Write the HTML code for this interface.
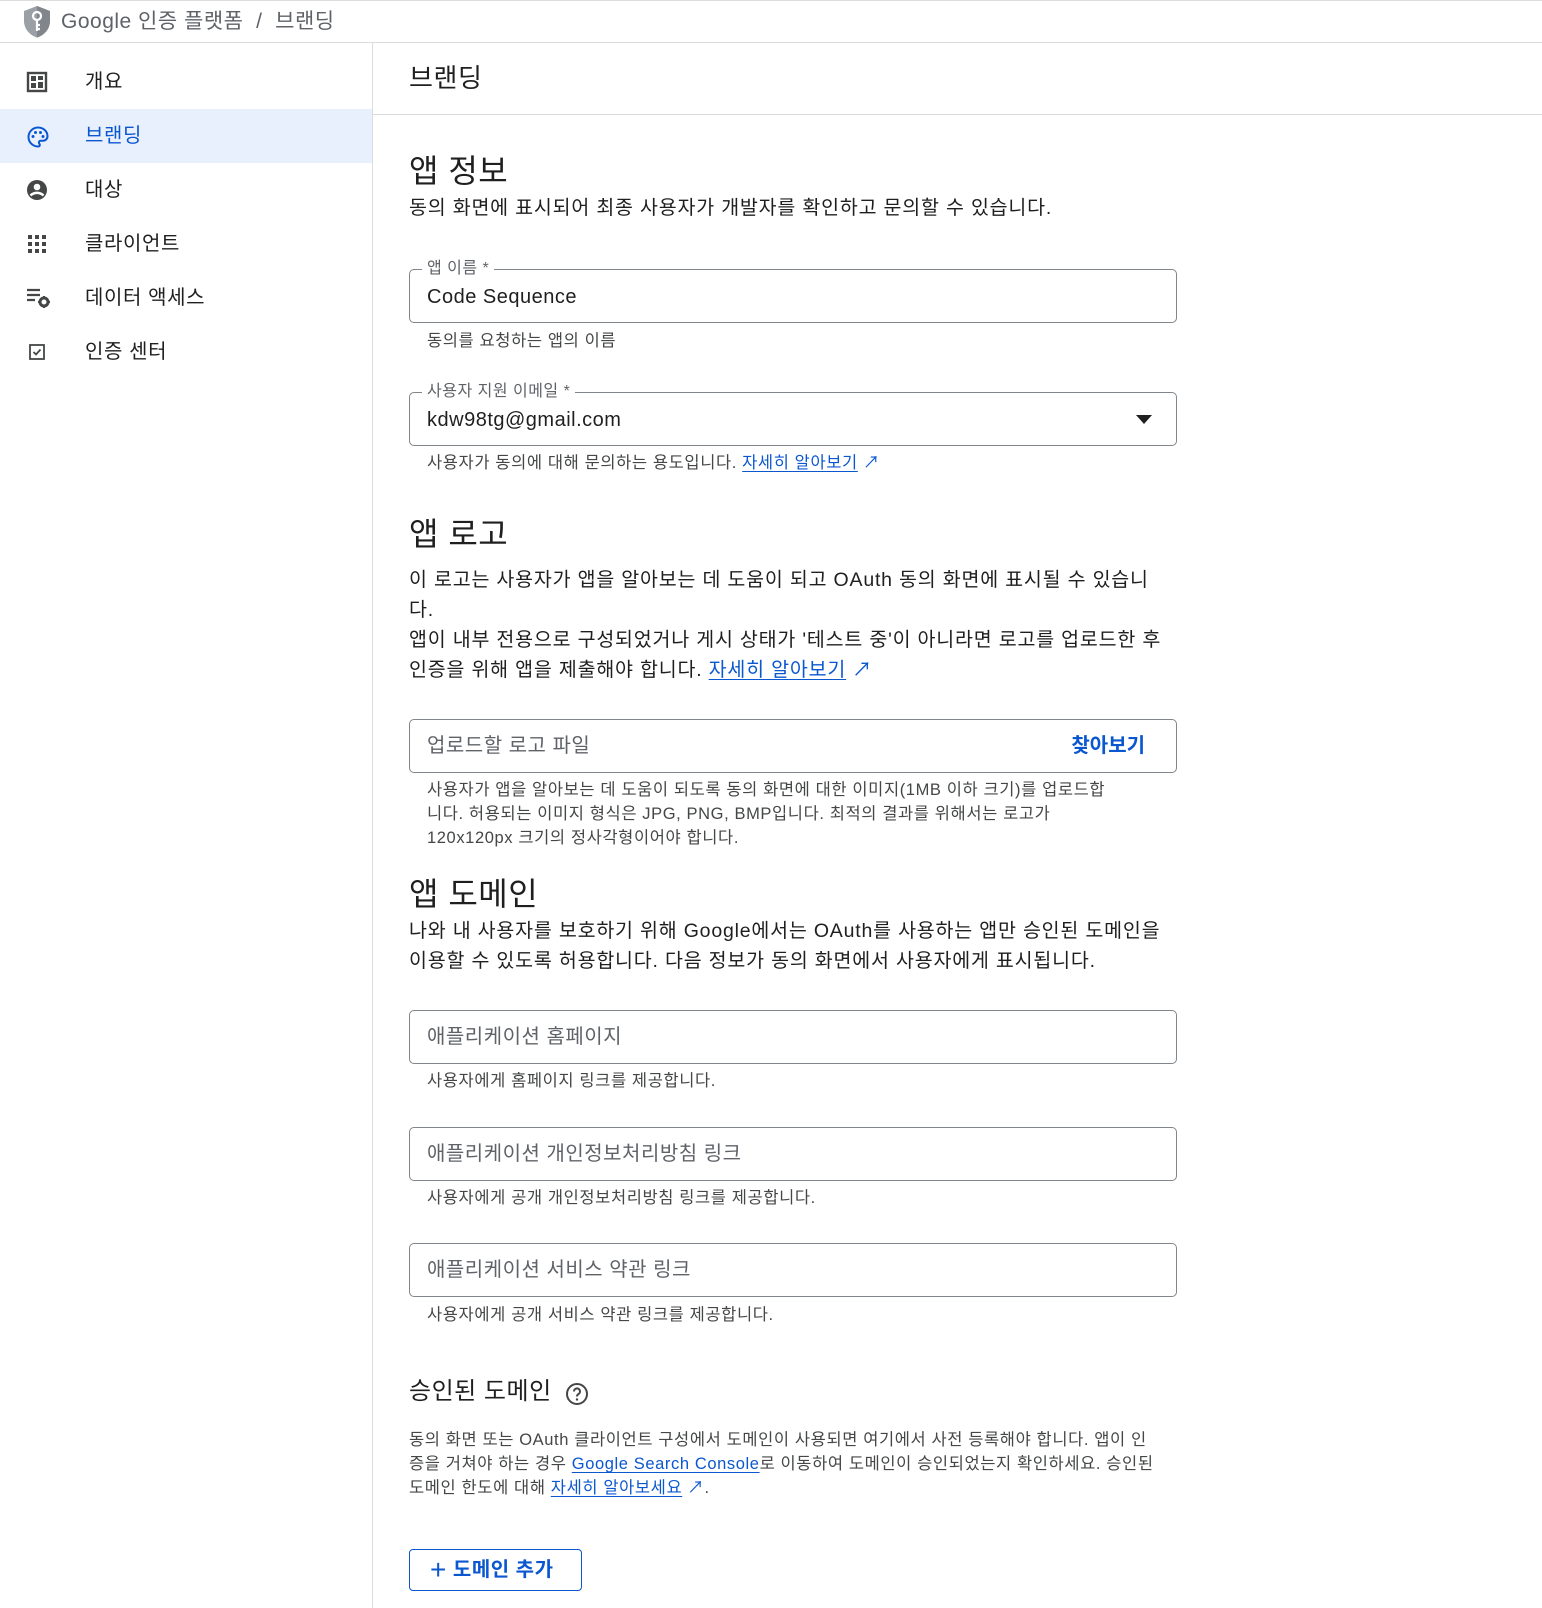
<!DOCTYPE html>
<html><head><meta charset="utf-8"><style>
*{margin:0;padding:0;box-sizing:border-box}
body{width:1542px;height:1608px;background:#fff;font-family:"Liberation Sans","Noto Sans CJK KR",sans-serif;color:#1f1f1f;position:relative;overflow:hidden}
.a{position:absolute;white-space:nowrap}
.top{position:absolute;left:0;top:0;width:1542px;height:43px;border-top:1px solid #ddd;border-bottom:1px solid #dadce0}
.side{position:absolute;left:0;top:43px;width:373px;height:1565px;border-right:1px solid #dadce0}
.item{position:absolute;left:0;width:372px;height:54px;font-size:20px;line-height:54px;letter-spacing:0.6px}
.item .t{position:absolute;left:85px}
.item svg{position:absolute;left:26px;top:16px}
.sel{background:#e8f0fe;color:#0b57d0}
.h1{font-size:32px;line-height:40px;letter-spacing:0.5px}
.p{font-size:19.5px;line-height:30px;color:#1f1f1f;letter-spacing:0.8px}
.help{font-size:16.5px;line-height:24px;color:#444746;letter-spacing:0.6px}
.field{position:absolute;left:409px;width:768px;height:54px;border:1px solid #80868b;border-radius:5px}
.field .v{position:absolute;left:17px;top:14px;font-size:20px;line-height:24px;letter-spacing:0.5px}
.ph{color:#5f6368}
.lbl{position:absolute;left:12px;top:-11px;background:#fff;padding:0 5px;font-size:16px;line-height:20px;color:#5f6368;letter-spacing:0.5px}
a{color:#0b57d0;text-decoration:underline;text-underline-offset:3px}
</style></head><body>
<div class="top">
<svg class="a" style="left:22px;top:4px" width="30" height="34" viewBox="0 0 30 34"><path d="M15 1L2 6v10c0 8 6 14.5 13 16.5 7-2 13-8.5 13-16.5V6z" fill="#9aa0a6"/><path d="M15 1v31.5c7-2 13-8.5 13-16.5V6z" fill="#80868b"/><circle cx="15" cy="11" r="4" fill="none" stroke="#fff" stroke-width="2.2"/><path d="M15 15v11M15 20h3M15 24h3" stroke="#fff" stroke-width="2.2"/></svg>
<div class="a" style="left:61px;top:7px;font-size:21px;line-height:28px;color:#5f6368;letter-spacing:0.5px">Google 인증 플랫폼 &nbsp;/ &nbsp;브랜딩</div>
</div>
<div class="side">
<div class="item" style="top:12px"><svg width="22" height="22" viewBox="0 0 22 22"><rect x="2" y="2" width="18" height="18" fill="none" stroke="#444746" stroke-width="2.4"/><rect x="5" y="5" width="5" height="5" fill="#444746"/><rect x="5" y="12" width="5" height="5" fill="#444746"/><rect x="12" y="5" width="5" height="4" fill="#444746"/><rect x="12" y="11" width="5" height="6" fill="#444746"/></svg><span class="t">개요</span></div>
<div class="item sel" style="top:66px"><svg width="24" height="24" viewBox="0 0 24 24"><path d="M12 2.5a9.5 9.5 0 0 0 0 19c1.3 0 1.8-.8 1.8-1.6 0-1-.9-1.4-.9-2.4 0-1 .8-1.7 1.8-1.7h2.2c2.6 0 4.6-2 4.6-4.6C21.5 6.3 17.3 2.5 12 2.5z" fill="none" stroke="#0b57d0" stroke-width="2"/><circle cx="7" cy="11.5" r="1.5" fill="#0b57d0"/><circle cx="9.5" cy="7.5" r="1.5" fill="#0b57d0"/><circle cx="14.5" cy="7.5" r="1.5" fill="#0b57d0"/><circle cx="17" cy="11.5" r="1.5" fill="#0b57d0"/></svg><span class="t">브랜딩</span></div>
<div class="item" style="top:120px"><svg width="22" height="22" viewBox="0 0 22 22"><circle cx="11" cy="11" r="10" fill="#444746"/><circle cx="11" cy="8" r="3.3" fill="#fff"/><path d="M4.5 16.5c3.5-3.5 9.5-3.5 13 0" stroke="#fff" stroke-width="2.4" fill="none"/></svg><span class="t">대상</span></div>
<div class="item" style="top:174px"><svg width="22" height="22" viewBox="0 0 22 22" fill="#444746"><rect x="2" y="2" width="4" height="4"/><rect x="9" y="2" width="4" height="4"/><rect x="16" y="2" width="4" height="4"/><rect x="2" y="9" width="4" height="4"/><rect x="9" y="9" width="4" height="4"/><rect x="16" y="9" width="4" height="4"/><rect x="2" y="16" width="4" height="4"/><rect x="9" y="16" width="4" height="4"/><rect x="16" y="16" width="4" height="4"/></svg><span class="t">클라이언트</span></div>
<div class="item" style="top:228px"><svg width="26" height="22" viewBox="0 0 26 22"><path d="M1 3h13M1 8h13M1 13h8" stroke="#444746" stroke-width="2.2"/><circle cx="18" cy="15" r="4" fill="none" stroke="#444746" stroke-width="3"/><path d="M18 9v2M18 19v2M12 15h2M22 15h2" stroke="#444746" stroke-width="2"/></svg><span class="t">데이터 액세스</span></div>
<div class="item" style="top:282px"><svg width="22" height="22" viewBox="0 0 22 22"><rect x="4" y="4" width="14" height="14" fill="none" stroke="#444746" stroke-width="1.8"/><path d="M7.5 11l2.5 2.5 4.5-5" stroke="#444746" stroke-width="1.8" fill="none"/></svg><span class="t">인증 센터</span></div>
</div>
<div class="a" style="left:409px;top:61px;font-size:26px;line-height:34px;letter-spacing:0.6px">브랜딩</div>
<div class="a" style="left:373px;top:114px;width:1169px;height:1px;background:#dadce0"></div>

<div class="a h1" style="left:409px;top:151px">앱 정보</div>
<div class="a p" style="left:409px;top:193px">동의 화면에 표시되어 최종 사용자가 개발자를 확인하고 문의할 수 있습니다.</div>
<div class="field" style="top:269px"><span class="lbl">앱 이름 *</span><span class="v a" style="top:15px">Code Sequence</span></div>
<div class="a help" style="left:427px;top:329px">동의를 요청하는 앱의 이름</div>
<div class="field" style="top:392px"><span class="lbl">사용자 지원 이메일 *</span><span class="v a" style="top:15px">kdw98tg@gmail.com</span><svg class="a" style="right:24px;top:22px" width="16" height="9"><path d="M0 0h16L8 9z" fill="#1f1f1f"/></svg></div>
<div class="a help" style="left:427px;top:451px">사용자가 동의에 대해 문의하는 용도입니다. <a href="#">자세히 알아보기</a> <span style="color:#0b57d0">↗</span></div>

<div class="a h1" style="left:409px;top:514px">앱 로고</div>
<div class="a p" style="left:409px;top:565px;white-space:normal;width:760px;word-break:break-all">이 로고는 사용자가 앱을 알아보는 데 도움이 되고 OAuth 동의 화면에 표시될 수 있습니다.<br>앱이 내부 전용으로 구성되었거나 게시 상태가 '테스트 중'이 아니라면 로고를 업로드한 후 인증을 위해 앱을 제출해야 합니다. <a href="#">자세히 알아보기</a> <span style="color:#0b57d0">↗</span></div>
<div class="field" style="top:719px"><span class="v a ph">업로드할 로고 파일</span><span class="a" style="right:31px;top:13px;font-size:20px;line-height:26px;color:#0b57d0;font-weight:bold">찾아보기</span></div>
<div class="a help" style="left:427px;top:778px;white-space:normal;width:688px">사용자가 앱을 알아보는 데 도움이 되도록 동의 화면에 대한 이미지(1MB 이하 크기)를 업로드합니다. 허용되는 이미지 형식은 JPG, PNG, BMP입니다. 최적의 결과를 위해서는 로고가 120x120px 크기의 정사각형이어야 합니다.</div>

<div class="a h1" style="left:409px;top:874px">앱 도메인</div>
<div class="a p" style="left:409px;top:916px;white-space:normal;width:760px">나와 내 사용자를 보호하기 위해 Google에서는 OAuth를 사용하는 앱만 승인된 도메인을 이용할 수 있도록 허용합니다. 다음 정보가 동의 화면에서 사용자에게 표시됩니다.</div>
<div class="field" style="top:1010px"><span class="v a ph">애플리케이션 홈페이지</span></div>
<div class="a help" style="left:427px;top:1069px">사용자에게 홈페이지 링크를 제공합니다.</div>
<div class="field" style="top:1127px"><span class="v a ph">애플리케이션 개인정보처리방침 링크</span></div>
<div class="a help" style="left:427px;top:1186px">사용자에게 공개 개인정보처리방침 링크를 제공합니다.</div>
<div class="field" style="top:1243px"><span class="v a ph">애플리케이션 서비스 약관 링크</span></div>
<div class="a help" style="left:427px;top:1303px">사용자에게 공개 서비스 약관 링크를 제공합니다.</div>

<div class="a" style="left:409px;top:1377px;font-size:24px;line-height:30px;letter-spacing:0.5px">승인된 도메인</div>
<svg class="a" style="left:565px;top:1382px" width="24" height="24" viewBox="0 0 24 24"><circle cx="12" cy="12" r="10" fill="none" stroke="#444746" stroke-width="2"/><path d="M9 9.5a3 3 0 1 1 4.5 2.5c-1 .6-1.5 1.2-1.5 2.5" fill="none" stroke="#444746" stroke-width="2"/><circle cx="12" cy="17.5" r="1.2" fill="#444746"/></svg>
<div class="a help" style="left:409px;top:1428px;white-space:normal;width:752px">동의 화면 또는 OAuth 클라이언트 구성에서 도메인이 사용되면 여기에서 사전 등록해야 합니다. 앱이 인증을 거쳐야 하는 경우 <a href="#">Google Search Console</a>로 이동하여 도메인이 승인되었는지 확인하세요. 승인된 도메인 한도에 대해 <a href="#">자세히 알아보세요</a> <span style="color:#0b57d0">↗</span>.</div>
<div class="a" style="left:409px;top:1549px;width:173px;height:42px;border:1px solid #0b57d0;border-radius:4px;color:#0b57d0;font-size:20px;line-height:40px;font-weight:bold;padding-left:20px;letter-spacing:0.5px"><span style="font-size:28px;font-weight:normal;vertical-align:-3px">+</span> 도메인 추가</div>
</body></html>
